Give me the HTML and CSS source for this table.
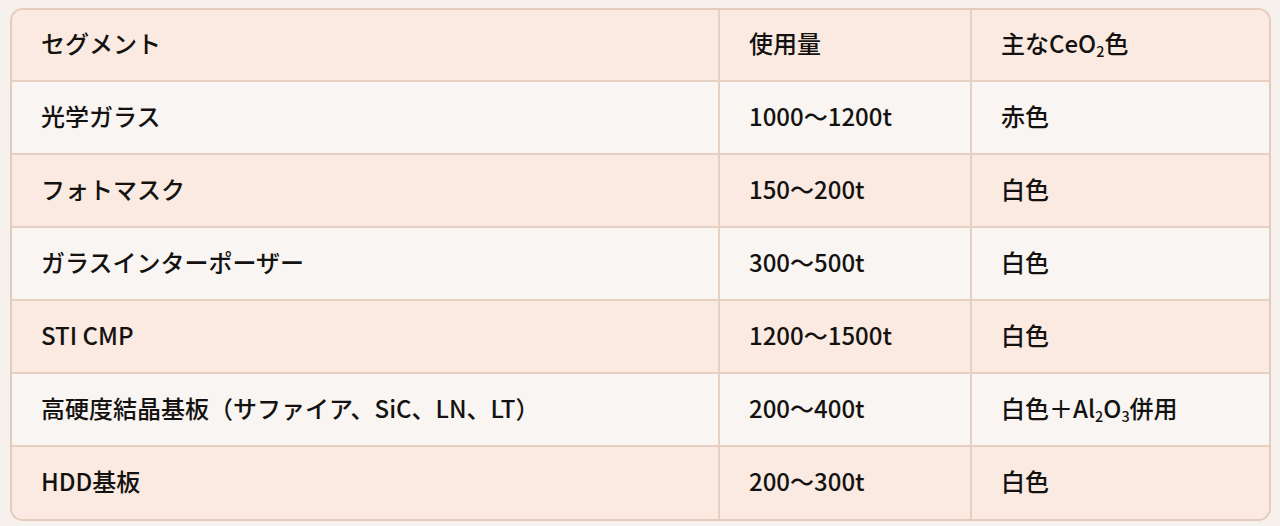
FILE: index.html
```html
<!DOCTYPE html>
<html lang="ja">
<head>
<meta charset="utf-8">
<link rel="stylesheet" href="styles.css">
</head>
<body>
<div class="wrap">
  <table class="tbl">
    <colgroup>
      <col class="c1"><col class="c2"><col class="c3">
    </colgroup>
    <thead>
      <tr class="peach"><th>セグメント</th><th>使用量</th><th>主なCeO<sub>2</sub>色</th></tr>
    </thead>
    <tbody>
      <tr class="light"><td>光学ガラス</td><td>1000〜1200t</td><td>赤色</td></tr>
      <tr class="peach"><td>フォトマスク</td><td>150〜200t</td><td>白色</td></tr>
      <tr class="light"><td>ガラスインターポーザー</td><td>300〜500t</td><td>白色</td></tr>
      <tr class="peach"><td>STI CMP</td><td>1200〜1500t</td><td>白色</td></tr>
      <tr class="light"><td>高硬度結晶基板（サファイア、SiC、LN、LT）</td><td>200〜400t</td><td>白色＋Al<sub>2</sub>O<sub>3</sub>併用</td></tr>
      <tr class="peach"><td>HDD基板</td><td>200〜300t</td><td>白色</td></tr>
    </tbody>
  </table>
</div>
</body>
</html>
```
FILE: styles.css
```css
html, body {
  margin: 0;
  padding: 0;
  background: #f6f1ed;
}
body {
  font-family: "Noto Sans CJK JP", "Noto Sans", sans-serif;
  color: #141210;
}
.wrap {
  padding: 8px 9px 5px 10px;
}
.tbl {
  width: 100%;
  table-layout: fixed;
  border-collapse: separate;
  border-spacing: 0;
  border: 2px solid #e4cbbb;
  border-radius: 13px;
  overflow: hidden;
}
.c1 { width: 708px; }
.c2 { width: 252px; }
.tbl th, .tbl td {
  height: 73px;
  padding: 0 0 4px 29px;
  box-sizing: border-box;
  text-align: left;
  font-weight: 500;
  font-size: 24px;
  line-height: 30px;
  border-bottom: 2px solid #e6d0c1;
  border-right: 2px solid #e6d0c1;
  vertical-align: middle;
  white-space: nowrap;
}
.tbl thead th { height: 72px; }
.tbl th:last-child, .tbl td:last-child { border-right: none; }
.tbl tbody tr:last-child td { border-bottom: none; height: 72px; }
.peach { background: #faeae1; }
.light { background: #f9f5f2; }
sub {
  font-size: 0.6em;
  vertical-align: -0.3em;
  line-height: 0;
}
```
